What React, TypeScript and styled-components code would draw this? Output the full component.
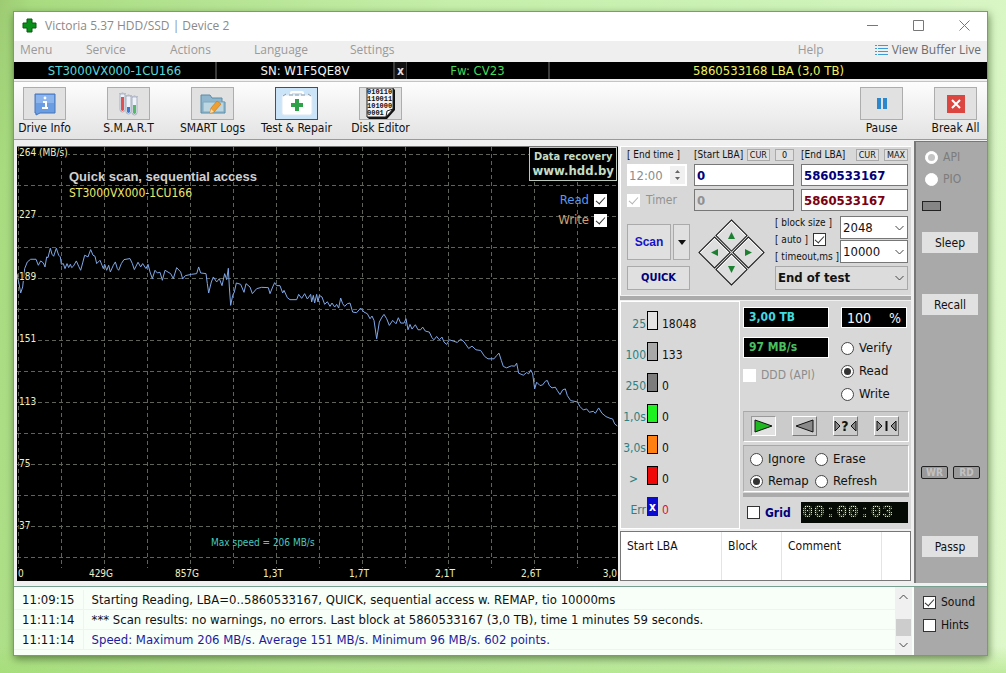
import React from "react";
import styled, { createGlobalStyle, css } from "styled-components";

const ui = '"DejaVu Sans Condensed", "DejaVu Sans", sans-serif';
const caption = '"Open Sans", "Noto Sans", sans-serif';

const Global = createGlobalStyle`
  * { box-sizing: border-box; }
  body { margin: 0; font: 12px/16px ${ui}; color: #111; }
  button, input, select { font: inherit; color: inherit; margin: 0; padding: 0; border-radius: 0; }
`;

const Desktop = styled.div`
  display: flex;
  min-height: 100vh;
  padding: 11px 18px 17px 13px;
  background: linear-gradient(to bottom, transparent 96%, rgba(160, 220, 110, 0.5)),
    linear-gradient(100deg, #9dcb73 0%, #a9dc81 3%, #c5efaa 40%, #cdf3b8 70%, #dff8cb 100%);
`;
const Window = styled.main`
  flex: 1;
  min-width: 0;
  display: flex;
  flex-direction: column;
  background: #f0f0f0;
  border: 1px solid #7e9a70;
  box-shadow: 1px 3px 8px rgba(40, 70, 20, 0.6);
`;

const TitleBar = styled.header`
  display: flex;
  align-items: center;
  height: 29px;
  padding: 0 16px 2px 8px;
  gap: 8px;
  background: #fff;
  color: #8a8a8a;
  font: 12px/16px ${caption};
`;
const Title = styled.h1`
  flex: 1;
  margin: 0;
  font: inherit;
`;
const WindowButtons = styled.div`
  display: flex;
  gap: 32px;
`;
const CaptionButton = styled.button`
  display: flex;
  width: 14px;
  height: 14px;
  border: 0;
  background: none;
  align-items: center;
  justify-content: center;
`;

const MenuBar = styled.nav`
  display: flex;
  height: 21px;
  align-items: center;
  padding: 0 6px 3px;
  background: #efefef;
  color: #9a9a9a;
  font: 12px/16px ${caption};
`;
const MenuLink = styled.a<{ $w?: number }>`
  width: ${(p) => (p.$w ? p.$w + "px" : "auto")};
  color: inherit;
  text-decoration: none;
`;
const BufferLink = styled.a`
  display: flex;
  align-items: center;
  gap: 4px;
  color: #6c6c6c;
  text-decoration: none;
`;
const MenuGap = styled.span`
  flex: 1;
`;

const DriveBar = styled.div`
  display: flex;
  height: 17px;
  background: #000;
  font-size: 13px;
  line-height: 17px;
`;
const DriveCell = styled.div<{ $w?: number; $color: string }>`
  flex: ${(p) => (p.$w ? `0 0 ${p.$w}px` : 1)};
  text-align: center;
  color: ${(p) => p.$color};
  & + & { border-left: 2px solid #3a3a3a; }
`;
const CloseDrive = styled.button`
  width: 14px;
  border: 0;
  border-left: 2px solid #3a3a3a;
  border-right: 1px solid #3a3a3a;
  background: #111;
  color: #ddd;
  font-size: 12px;
  font-weight: bold;
  line-height: 14px;
`;

const Toolbar = styled.div`
  display: flex;
  height: 59px;
  margin-top: 2px;
  padding: 5px 1px 0 0;
  background: linear-gradient(#fdfdfd, #e3e3e3);
  border-top: 1px solid #c4c4c4;
  border-bottom: 1px solid #9a9a9a;
`;
const ToolGroup = styled.div<{ $gap: number }>`
  display: flex;
  gap: ${(p) => p.$gap}px;
`;
const ToolItem = styled.label`
  width: 61px;
  display: flex;
  flex-direction: column;
  align-items: center;
  white-space: nowrap;
`;
const ToolButton = styled.button<{ $on?: boolean }>`
  display: flex;
  align-items: center;
  justify-content: center;
  width: 43px;
  height: 33px;
  background: ${(p) => (p.$on ? "#cce4f7" : "#e1e1e1")};
  border: 1px solid ${(p) => (p.$on ? "#1a5a9a" : "#adadad")};
`;

const Body = styled.div`
  flex: 1;
  display: flex;
  margin-top: 1px;
  min-height: 441px;
`;
const ChartPane = styled.section`
  position: relative;
  flex: 1;
  min-width: 320px;
  margin: 5px 1px 5px 3px;
  background: #000;
  border-top: 1px solid #777;
`;
const ChartSvg = styled.svg`
  position: absolute;
  width: 100%;
  height: 100%;
  font: 10px ${ui};
`;
const ChartTitle = styled.div`
  position: absolute;
  left: 52px;
  top: 21px;
  color: #eee86a;
`;
const ScanName = styled.div`
  color: #d0d0d0;
  font: bold 13px/17px "Liberation Sans", sans-serif;
`;
const Advert = styled.a`
  position: absolute;
  right: 1px;
  top: 0;
  padding: 1px 2px 0;
  border: 1px solid #bcc8bc;
  background: #000;
  color: #c4dcc4;
  font-size: 11px;
  font-weight: bold;
  line-height: 15px;
  height: 34px;
  text-align: center;
  text-decoration: none;
`;
const AdvertSite = styled.span`
  display: block;
  font-size: 13px;
  line-height: 13px;
`;
const Legend = styled.div`
  position: absolute;
  right: 11px;
  top: 45px;
  display: flex;
  flex-direction: column;
  align-items: flex-end;
  gap: 4px;
  font-size: 13px;
`;
const MaxSpeed = styled.div`
  position: absolute;
  left: 194px;
  bottom: 30px;
  color: #45c8c0;
  font-size: 10px;
`;

const CheckLabel = styled.label<{ $color?: string; $gap?: number }>`
  display: flex;
  align-items: center;
  gap: ${(p) => p.$gap ?? 5}px;
  color: ${(p) => p.$color ?? "#111"};
  white-space: nowrap;
`;
const CheckText = styled.span`
  font-size: 12px;
`;
const Tick = styled.input.attrs({ type: "checkbox" })<{ $plain?: boolean }>`
  appearance: none;
  flex: none;
  width: 13px;
  height: 13px;
  background: #fff;
  border: 1px solid ${(p) => (p.$plain ? "#fff" : "#333")};
  display: flex;
  justify-content: center;
  &:checked::after {
    content: "";
    width: 4px;
    height: 8px;
    border: solid ${(p) => (p.disabled ? "#b4b4b4" : "#333")};
    border-width: 0 1px 1px 0;
    transform: rotate(42deg);
  }
`;
const Dot = styled.input.attrs({ type: "radio" })`
  appearance: none;
  flex: none;
  width: 13px;
  height: 13px;
  border: 1px solid ${(p) => (p.disabled ? "#fff" : "#444")};
  border-radius: 50%;
  background: #fff;
  display: grid;
  place-items: center;
  &:checked::after {
    content: "";
    width: 7px;
    height: 7px;
    border-radius: 50%;
    background: ${(p) => (p.disabled ? "#c4c4c4" : "#333")};
  }
`;

const Controls = styled.section`
  width: 295px;
  display: flex;
  flex-direction: column;
  margin-top: 5px;
  padding: 0 3px 0 1px;
`;
const ScanPanel = styled.div`
  height: 149px;
  padding: 2px 3px 0 6px;
  background: #d8d8d8;
  border-top: 1px solid #fff;
  border-left: 1px solid #fff;
`;
const LbaGrid = styled.div`
  display: grid;
  grid-template-columns: 60px 100px 1fr;
  grid-template-rows: 12px 22px 22px;
  column-gap: 7px;
  row-gap: 3px;
  font-size: 10px;
  line-height: 12px;
`;
const Caption = styled.div`
  display: flex;
  align-items: center;
  justify-content: space-between;
  white-space: nowrap;
  font-size: 10px;
  line-height: 12px;
`;
const TinyButton = styled.button`
  min-width: 19px;
  height: 12px;
  padding: 0 2px;
  border: 1px solid #aaa;
  background: #e0e0e0;
  font: 9px/10px ${ui};
`;
const TinyRow = styled.div`
  display: flex;
  gap: 5px;
`;
const field = css`
  width: 100%;
  min-width: 0;
  height: 22px;
  border: 1px solid #777;
  background: #fff;
`;
const LbaInput = styled.input<{ $color?: string }>`
  ${field}
  padding: 0 2px;
  font: bold 13px/18px ${ui};
  color: ${(p) => p.$color ?? "#00007a"};
  &:disabled { background: #dcdcdc; color: #909090; }
`;
const TimeBox = styled.div`
  display: flex;
  height: 22px;
  background: #fff;
  color: #8c8c8c;
  align-items: center;
  justify-content: space-between;
  padding: 0 2px;
  font-size: 13px;
`;
const TimeInput = styled.input`
  width: 38px;
  border: 0;
  background: none;
`;
const Spinner = styled.svg`
  background: #f0f0f0;
`;

const ActionRow = styled.div`
  display: grid;
  grid-template-columns: 63px 67px 1fr;
  column-gap: 8px;
  margin-top: 5px;
`;
const ScanColumn = styled.div`
  display: grid;
  grid-template-columns: 44px 17px;
  grid-template-rows: 36px 24px;
  gap: 6px 2px;
  padding-top: 8px;
`;
const BlueButton = styled.button<{ $wide?: boolean }>`
  grid-column: ${(p) => (p.$wide ? "1 / -1" : "auto")};
  display: flex;
  align-items: center;
  justify-content: center;
  border: 1px solid #aaa;
  background: #e0e0e0;
  color: ${(p) => (p.$wide ? "#00007a" : "#1414c8")};
  font: bold ${(p) => (p.$wide ? 11 : 12)}px/16px ${(p) => (p.$wide ? ui : '"Liberation Sans", sans-serif')};
`;
const PadBox = styled.div`
  display: grid;
  place-items: center;
  height: 67px;
  margin-top: 3px;
`;
const Pad = styled.div`
  display: grid;
  grid-template-columns: 23px 23px;
  grid-template-rows: 23px 23px;
  gap: 1px;
  transform: rotate(45deg);
`;
const PadButton = styled.button`
  display: grid;
  place-items: center;
  border: 1px solid #111;
  background: #dedede;
  box-shadow: inset 1px 1px #fff;
`;
const PadArrow = styled.svg<{ $turn: number }>`
  transform: rotate(${(p) => p.$turn}deg);
`;
const OptionColumn = styled.div`
  display: grid;
  grid-template-columns: 65px 1fr;
  grid-template-rows: 47px 24px;
  row-gap: 3px;
  padding-left: 2px;
`;
const OptionLabels = styled.div`
  display: flex;
  flex-direction: column;
  justify-content: space-between;
  font-size: 10px;
  line-height: 13px;
  white-space: nowrap;
`;
const SelectStack = styled.div`
  display: flex;
  flex-direction: column;
  gap: 1px;
`;
const SelectBox = styled.div<{ $span?: boolean }>`
  grid-column: ${(p) => (p.$span ? "1 / -1" : "auto")};
  display: grid;
  align-items: center;
  > * { grid-area: 1 / 1; }
  > svg { justify-self: end; margin-right: 4px; pointer-events: none; }
`;
const Select = styled.select<{ $bold?: boolean }>`
  appearance: none;
  ${field}
  height: ${(p) => (p.$bold ? 24 : 23)}px;
  padding: 0 2px;
  font-size: 13px;
  ${(p) => p.$bold && "font-weight: bold; background: #dcdcdc; border-color: #a8a8a8;"}
`;

const Divider = styled.div`
  height: 4px;
  margin: 1px 0;
  background: #ababab;
`;
const Stats = styled.div`
  flex: 1;
  display: grid;
  grid-template-columns: 120px 1fr;
  background: #d8d8d8;
`;
const Blocks = styled.ul`
  margin: 0;
  padding: 9px 0 0;
  list-style: none;
  border: 1px solid #fff;
`;
const BlockRow = styled.li`
  display: grid;
  grid-template-columns: 25px 11px 1fr;
  column-gap: 1px;
  align-items: end;
  height: 19px;
  margin-bottom: 12px;
  line-height: 11px;
  &:last-child { margin-bottom: 8px; }
`;
const BlockLimit = styled.span<{ $center?: boolean }>`
  color: #2d8080;
  text-align: ${(p) => (p.$center ? "center" : "right")};
  white-space: nowrap;
`;
const Swatch = styled.span<{ $color: string; $flat?: boolean }>`
  height: 19px;
  border: 1px solid ${(p) => (p.$flat ? p.$color : "#000")};
  background: ${(p) => p.$color};
  color: #fff;
  font-weight: bold;
  line-height: 19px;
  text-align: center;
`;
const BlockCount = styled.span<{ $red?: boolean }>`
  padding-left: 3px;
  color: ${(p) => (p.$red ? "#e01030" : "#111")};
`;

const StatPane = styled.div`
  padding: 6px 2px 0 3px;
  display: flex;
  flex-direction: column;
`;
const ReadoutGrid = styled.div`
  display: grid;
  grid-template-columns: 86px 66px;
  column-gap: 12px;
`;
const StatColumn = styled.div`
  display: flex;
  flex-direction: column;
  gap: 9px;
`;
const Readout = styled.output<{ $color: string; $light?: boolean }>`
  display: flex;
  justify-content: space-between;
  height: 21px;
  padding: 0 5px;
  border: 1px solid #fff;
  background: #000;
  color: ${(p) => p.$color};
  font-weight: ${(p) => (p.$light ? "normal" : "bold")};
  font-size: ${(p) => (p.$light ? 14 : 12)}px;
  line-height: ${(p) => (p.$light ? 21 : 18)}px;
`;
const RadioList = styled.div`
  display: flex;
  flex-direction: column;
  gap: 7px;
  padding-top: 3px;
  font-size: 13px;
`;
const Inset = styled.div<{ $top: number }>`
  margin-top: ${(p) => p.$top}px;
  border: 1px solid #fff;
  border-top-color: #a8a8a8;
  border-left-color: #b0b0b0;
  background: #cbcbcb;
`;
const PlayRow = styled(Inset)`
  display: flex;
  gap: 16px;
  padding: 4px 0 5px 7px;
`;
const PlayButton = styled.button<{ $on?: boolean }>`
  display: grid;
  place-items: center;
  width: 25px;
  height: 20px;
  border: 1px solid;
  border-color: ${(p) => (p.$on ? "#999 #fff #fff #999" : "#fff #777 #777 #fff")};
  background: ${(p) => (p.$on ? "#e2e2e2" : "#cbcbcb")};
`;
const DefectGrid = styled(Inset)`
  display: grid;
  grid-template-columns: 65px 1fr;
  row-gap: 6px;
  padding: 5px 6px 2px;
  font-size: 13px;
`;
const ClockRow = styled.div`
  display: flex;
  align-items: center;
  justify-content: space-between;
  padding: 4px 1px 0 4px;
`;
const Clock = styled.output`
  width: 107px;
  height: 21px;
  padding-left: 1px;
  background: #050a04;
`;
const ClockDigits = styled.span`
  display: block;
  font: bold 19px/21px "Liberation Mono", monospace;
  color: transparent;
  background: conic-gradient(#e8ecd0 25%, #26301c 0) 0 0 / 2px 2px;
  background-clip: text;
`;

const Defects = styled.table`
  width: 100%;
  height: 50px;
  margin: 2px 0 5px;
  border: 1px solid #777;
  border-spacing: 0;
  background: #fff;
  table-layout: fixed;
`;
const DefectHead = styled.th<{ $w?: number }>`
  width: ${(p) => (p.$w ? p.$w + "px" : "auto")};
  height: 36px;
  padding: 6px 6px 0;
  border-right: 1px solid #e4e4e4;
  font-weight: normal;
  text-align: left;
  vertical-align: top;
  &:last-child { border-right: 0; }
`;

const Side = styled.aside`
  width: 73px;
  display: flex;
  flex-direction: column;
  align-items: flex-start;
  margin-bottom: 3px;
  padding: 7px 7px 0 6px;
  background: #a9a9a9;
  border-left: 2px solid #777;
  border-top: 1px solid #777;
`;
const SideRadio = styled.div`
  display: flex;
  flex-direction: column;
  gap: 6px;
  padding-left: 3px;
`;
const Lamp = styled.span`
  width: 19px;
  height: 10px;
  margin-top: 14px;
  border: 1px solid #222;
  background: #858585;
`;
const SideButton = styled.button<{ $top: number }>`
  width: 56px;
  height: 21px;
  margin-top: ${(p) => p.$top}px;
  border: 0;
  background: #e1e1e1;
`;
const BadgeRow = styled.div`
  display: flex;
  gap: 5px;
  margin: 151px 0 0 -1px;
`;
const Badge = styled.span`
  width: 27px;
  height: 13px;
  border: 1px solid #222;
  border-radius: 2px;
  background: #9a9a9a;
  color: #c2c2c2;
  font-size: 10px;
  line-height: 11px;
  font-weight: bold;
  text-align: center;
`;

const Footer = styled.footer`
  display: flex;
  height: 69px;
  border-top: 1px solid #77a090;
`;
const LogArea = styled.div`
  flex: 1;
  min-width: 0;
  display: flex;
  background: #f8fff8;
`;
const LogTable = styled.table`
  flex: 1;
  border-spacing: 0;
  align-self: flex-start;
  margin-top: 3px;
  font-size: 13px;
`;
const LogCell = styled.td<{ $color?: string }>`
  height: 20px;
  padding: 0 8px;
  border-bottom: 1px solid #eef4ee;
  color: ${(p) => p.$color ?? "#111"};
  line-height: 18px;
  white-space: nowrap;
  &:first-child { width: 69px; border-right: 1px solid #eef4ee; }
`;
const ScrollBar = styled.div`
  width: 17px;
  margin-right: 2px;
  display: flex;
  flex-direction: column;
  align-items: center;
  padding: 7px 0;
  background: #f0f0f0;
`;
const Thumb = styled.span`
  width: 15px;
  height: 17px;
  margin: auto 0 6px;
  background: #cdcdcd;
`;
const FootSide = styled.div`
  width: 73px;
  padding: 7px 0 0 9px;
  display: flex;
  flex-direction: column;
  gap: 7px;
  background: #a9a9a9;
`;

const Chevron = ({ up }: { up?: boolean }) => (
  <svg width="9" height="6" viewBox="0 0 9 6" fill="none" stroke="#444">
    <path d={up ? "M.5 5 4.5 1l4 4" : "M.5 1l4 4 4-4"} />
  </svg>
);

const speedCurve =
  "51,400 57,430 62,458 68,440 74,385 82,365 92,357 108,357 115,375 122,362 130,368 135,380 140,350 144,352 151,324 156,342 161,348 169,324 176,345 181,350 184,372 190,370 195,385 201,370 206,382 211,372 215,382 220,378 229,362 236,378 242,390 248,368 254,345 264,350 272,328 279,345 285,348 290,370 300,360 306,375 310,385 314,372 320,390 326,375 331,395 340,375 346,365 352,385 356,390 364,370 372,358 390,355 397,370 403,388 414,366 422,380 428,370 438,385 444,372 450,395 457,415 465,390 472,398 480,396 487,420 495,390 512,400 520,415 530,382 542,395 548,416 556,406 575,402 590,400 596,380 602,398 618,400 622,430 626,458 634,425 640,410 650,425 658,415 666,436 674,400 680,418 685,384 688,440 692,495 698,465 703,455 709,428 722,432 732,456 738,430 750,440 757,460 770,445 785,441 805,442 810,460 818,440 824,427 830,436 840,436 848,458 852,450 862,472 870,478 890,478 896,462 905,474 914,460 922,476 932,462 935,485 940,465 944,488 950,462 954,485 958,465 966,470 974,492 982,484 990,498 996,488 1004,500 1010,492 1016,503 1022,473 1028,490 1034,498 1042,490 1050,488 1058,515 1070,517 1082,503 1092,515 1102,520 1110,535 1116,527 1122,540 1130,595 1138,545 1146,530 1152,522 1160,535 1168,555 1178,540 1188,550 1195,532 1202,548 1212,548 1218,535 1224,568 1230,552 1236,566 1246,553 1254,568 1262,568 1268,560 1276,572 1288,575 1296,592 1302,598 1310,588 1318,598 1326,590 1332,605 1340,612 1348,598 1360,602 1372,606 1382,596 1392,604 1406,624 1416,617 1428,628 1442,630 1454,648 1464,655 1482,655 1490,645 1497,638 1504,660 1510,678 1520,682 1534,676 1544,677 1550,668 1556,698 1570,704 1580,696 1586,700 1592,688 1598,700 1604,745 1610,725 1620,735 1628,733 1636,722 1642,720 1648,735 1656,742 1666,740 1672,750 1680,762 1688,748 1696,745 1702,765 1712,780 1732,784 1740,798 1750,808 1760,805 1768,815 1780,812 1786,818 1796,802 1806,818 1818,828 1830,833 1838,835 1844,850 1852,856";

const speedMarks = ["264 (MB/s)", "227", "189", "151", "113", "75", "37"];
const sizeMarks = ["0", "429G", "857G", "1,3T", "1,7T", "2,1T", "2,6T", "3,0"];
const anchorOf = (i: number) => (i === 0 ? "start" : i === sizeMarks.length - 1 ? "end" : "middle");
const CHART_W = 601;
const CHART_H = 433;
const pctX = (x: number) => `${(x / CHART_W) * 100}%`;
const pctY = (y: number) => `${(y / CHART_H) * 100}%`;

const Chart = () => (
  <ChartSvg role="img" aria-label="Read speed by position">
    <g stroke="#60635a" strokeDasharray="4 3" shapeRendering="crispEdges">
      {Array.from({ length: 14 }, (_, i) => (
        <line key={i} x1={pctX(i * 43 + 1)} x2={pctX(i * 43 + 1)} y1="0" y2="97%" />
      ))}
      {Array.from({ length: 14 }, (_, i) => (
        <line key={i} x1="0" x2="100%" y1={pctY(i * 31 + 7)} y2={pctY(i * 31 + 7)} />
      ))}
    </g>
    <svg width="100%" height="100%" viewBox="51 21 1803 1299" preserveAspectRatio="none">
      <polyline points={speedCurve} fill="none" stroke="#7fa8e8" vectorEffect="non-scaling-stroke" />
    </svg>
    <g fill="#f0f0c0" stroke="#000" strokeWidth="2" paintOrder="stroke">
      {speedMarks.map((m, i) => (
        <text key={m} x="2" y={pctY(i * 62 + 9)}>{m}</text>
      ))}
      {sizeMarks.map((m, i) => (
        <text key={m} x={pctX(i === 0 ? 1 : i === 7 ? 600 : i * 86 - 2)} y={pctY(429)} textAnchor={anchorOf(i)}>{m}</text>
      ))}
    </g>
  </ChartSvg>
);

const InfoIcon = () => (
  <svg width="24" height="24" viewBox="0 0 24 24">
    <path d="M2 2h20v19H7l-4 2v-2H2z" fill="#6a9de2" stroke="#4775bb" />
    <path d="M3 3h18v8H3z" fill="#8bb4ec" />
    <path d="M10 10h3v6h2M9 16h6" stroke="#fff" strokeWidth="2" fill="none" />
    <circle cx="12" cy="6" r="1.4" fill="#fff" />
  </svg>
);
const TubesIcon = () => (
  <svg width="24" height="24" viewBox="0 0 24 24">
    {[
      [3, 1, 5, "#e05050"],
      [9, 3, 15, "#3f78d0"],
      [15, 4, 13, "#54b868"],
    ].map(([x, y, l, c]) => (
      <g key={x as number}>
        <rect x={x} y={y} width="5" height="19" rx="2.5" fill="#eef3fa" stroke="#a8afbd" />
        <path d={`M${Number(x) + 1} ${l}h3v${Number(y) + 17 - Number(l)}q-1.500 2-3 0z`} fill={c as string} />
        <rect x={Number(x) - 1} y={y} width="7" height="1.500" fill="#b6bccb" />
      </g>
    ))}
  </svg>
);
const FolderIcon = () => (
  <svg width="26" height="24" viewBox="0 0 26 24">
    <path d="M1 21V3h9l2 3h10v4h3v11z" fill="#8fb6cc" stroke="#5b8ca8" />
    <path d="M3 20V10h21v10z" fill="#bcd6e2" stroke="#7ea9bf" />
    <path d="M17 9l4 3-7 8-4 1 1-5z" fill="#f0a030" stroke="#c97c20" strokeWidth=".7" />
    <path d="M10 21l1-4 3 3z" fill="#f6e0b8" />
  </svg>
);
const KitIcon = () => (
  <svg width="32" height="27" viewBox="0 0 32 27">
    <path d="M10 5V3q0-1 1-1h10q1 0 1 1v2" fill="none" stroke="#fff" strokeWidth="2" />
    <rect x="1" y="5" width="30" height="20" rx="2" fill="#fff" stroke="#dde8f2" />
    <path d="M2 6l3-2M27 4l3 2M8 5h4M14 5h4M20 5h4" stroke="#8a9aa8" />
    <path d="M14 9h4v4h4v4h-4v4h-4v-4h-4v-4h4z" fill="#2fa148" />
  </svg>
);
const BinaryIcon = () => (
  <svg width="30" height="31" viewBox="0 0 30 31">
    <path d="M2 0h25l2 2v20l-8 9H3l-2-2V2z" fill="#111" />
    <path d="M1 0h26v21l-7 8H1z" fill="#f4f4f4" stroke="#222" />
    <path d="M20 29l1-6 6-2z" fill="#fff" stroke="#222" />
    <g fontFamily="Liberation Mono" fontSize="7" fontWeight="bold" fill="#111">
      <text x="1" y="6">010110</text>
      <text x="1" y="13">110011</text>
      <text x="1" y="20">101000</text>
      <text x="1" y="27">0001</text>
    </g>
  </svg>
);
const PauseIcon = () => (
  <svg width="12" height="12">
    <path d="M1 0h4v11H1zM7 0h4v11H7z" fill="#2d87cc" />
  </svg>
);
const BreakIcon = () => (
  <svg width="18" height="18">
    <rect width="18" height="18" fill="#dc4640" />
    <path d="M5 5l8 8M13 5l-8 8" stroke="#fff" strokeWidth="2" />
  </svg>
);

const tools = [
  { name: "Drive Info", icon: <InfoIcon /> },
  { name: "S.M.A.R.T", icon: <TubesIcon /> },
  { name: "SMART Logs", icon: <FolderIcon /> },
  { name: "Test & Repair", icon: <KitIcon />, on: true },
  { name: "Disk Editor", icon: <BinaryIcon /> },
];
const runTools = [
  { name: "Pause", icon: <PauseIcon /> },
  { name: "Break All", icon: <BreakIcon /> },
];
const menus: [string, number][] = [
  ["Menu", 66],
  ["Service", 84],
  ["Actions", 84],
  ["Language", 96],
  ["Settings", 60],
];
const blocks = [
  { limit: "25", color: "#e4e4e4", count: "18048" },
  { limit: "100", color: "#a8a8a8", count: "133" },
  { limit: "250", color: "#7c7c7c", count: "0" },
  { limit: "1,0s", color: "#1ff01f", count: "0" },
  { limit: "3,0s", color: "#ff8010", count: "0" },
  { limit: ">", color: "#f00808", count: "0", center: true },
  { limit: "Err", color: "#0a0ad0", count: "0", mark: "x" },
];
const log = [
  { time: "11:09:15", text: "Starting Reading, LBA=0..5860533167, QUICK, sequential access w. REMAP, tio 10000ms" },
  { time: "11:11:14", text: "*** Scan results: no warnings, no errors. Last block at 5860533167 (3,0 TB), time 1 minutes 59 seconds." },
  { time: "11:11:14", text: "Speed: Maximum 206 MB/s. Average 151 MB/s. Minimum 96 MB/s. 602 points.", color: "#1c1ca0" },
];

export default function App() {
  return (
    <>
      <Global />
      <Desktop>
        <Window>
          <TitleBar>
            <svg width="15" height="15">
              <path d="M5 1h5v4h4v5h-4v4H5v-4H1V5h4z" fill="#0a8f1a" stroke="#045c0c" />
            </svg>
            <Title>Victoria 5.37 HDD/SSD | Device 2</Title>
            <WindowButtons>
              <CaptionButton aria-label="Minimize">
                <svg width="11" height="11"><path d="M0 5.500h11" stroke="#777" /></svg>
              </CaptionButton>
              <CaptionButton aria-label="Maximize">
                <svg width="11" height="11"><path d="M.5.5h10v10H.5z" stroke="#777" fill="none" /></svg>
              </CaptionButton>
              <CaptionButton aria-label="Close">
                <svg width="11" height="11"><path d="M.5.500l10 10M10.500.500l-10 10" stroke="#777" /></svg>
              </CaptionButton>
            </WindowButtons>
          </TitleBar>
          <MenuBar>
            {menus.map(([m, w]) => (
              <MenuLink key={m} href="#" $w={w}>{m}</MenuLink>
            ))}
            <MenuGap />
            <MenuLink href="#" $w={77}>Help</MenuLink>
            <BufferLink href="#">
              <svg width="13" height="13" stroke="#3d9bd6">
                <path d="M0 1.500h2M3 1.500h10M0 4.500h2M3 4.500h10M0 7.500h2M3 7.500h10M0 10.500h2M3 10.500h10" />
              </svg>
              View Buffer Live
            </BufferLink>
          </MenuBar>
          <DriveBar>
            <DriveCell $w={201} $color="#58d8dc">ST3000VX000-1CU166</DriveCell>
            <DriveCell $w={178} $color="#f4f4f4">SN: W1F5QE8V</DriveCell>
            <CloseDrive>x</CloseDrive>
            <DriveCell $w={141} $color="#48d858">Fw: CV23</DriveCell>
            <DriveCell $color="#f0f060">5860533168 LBA (3,0 TB)</DriveCell>
          </DriveBar>
          <Toolbar>
            <ToolGroup $gap={23}>
              {tools.map((t) => (
                <ToolItem key={t.name}>
                  <ToolButton $on={t.on}>{t.icon}</ToolButton>
                  {t.name}
                </ToolItem>
              ))}
            </ToolGroup>
            <MenuGap />
            <ToolGroup $gap={13}>
              {runTools.map((t) => (
                <ToolItem key={t.name}>
                  <ToolButton>{t.icon}</ToolButton>
                  {t.name}
                </ToolItem>
              ))}
            </ToolGroup>
          </Toolbar>

          <Body>
            <ChartPane>
              <Chart />
              <ChartTitle>
                <ScanName>Quick scan, sequential access</ScanName>
                ST3000VX000-1CU166
              </ChartTitle>
              <Advert href="#">Data recovery<AdvertSite>www.hdd.by</AdvertSite></Advert>
              <Legend>
                <CheckLabel $color="#5a98e8">Read <Tick defaultChecked $plain /></CheckLabel>
                <CheckLabel $color="#d0a070">Write <Tick defaultChecked $plain /></CheckLabel>
              </Legend>
              <MaxSpeed>Max speed = 206 MB/s</MaxSpeed>
            </ChartPane>

            <Controls>
              <ScanPanel>
                <LbaGrid>
                  <Caption>[ End time ]</Caption>
                  <Caption>
                    [Start LBA]
                    <TinyRow><TinyButton>CUR</TinyButton><TinyButton>0</TinyButton></TinyRow>
                  </Caption>
                  <Caption>
                    [End LBA]
                    <TinyRow><TinyButton>CUR</TinyButton><TinyButton>MAX</TinyButton></TinyRow>
                  </Caption>
                  <TimeBox>
                    <TimeInput aria-label="End time" defaultValue="12:00" disabled />
                    <Spinner width="15" height="18">
                      <path d="M5 7l2.500-3L10 7zM5 11l2.500 3 2.500-3z" fill="#666" />
                    </Spinner>
                  </TimeBox>
                  <LbaInput aria-label="Start LBA" defaultValue="0" />
                  <LbaInput aria-label="End LBA" defaultValue="5860533167" />
                  <CheckLabel $color="#929292" $gap={6}>
                    <Tick defaultChecked disabled $plain />
                    <CheckText>Timer</CheckText>
                  </CheckLabel>
                  <LbaInput aria-label="Current LBA" defaultValue="0" disabled />
                  <LbaInput aria-label="Last LBA" defaultValue="5860533167" $color="#7a0010" />
                </LbaGrid>
                <ActionRow>
                  <ScanColumn>
                    <BlueButton>Scan</BlueButton>
                    <BlueButton aria-label="Scan options">
                      <svg width="8" height="5"><path d="M0 0h8L4 5z" fill="#111" /></svg>
                    </BlueButton>
                    <BlueButton $wide>QUICK</BlueButton>
                  </ScanColumn>
                  <PadBox>
                    <Pad>
                      {[["Up", 0], ["Right", 90], ["Left", -90], ["Down", 180]].map(([n, a]) => (
                        <PadButton key={n} aria-label={String(n)}>
                          <PadArrow $turn={Number(a) - 45} width="7" height="7">
                            <path d="M3.500 0l3.500 7H0z" fill="#1c8030" />
                          </PadArrow>
                        </PadButton>
                      ))}
                    </Pad>
                  </PadBox>
                  <OptionColumn>
                    <OptionLabels>
                      <label htmlFor="block">[ block size ]</label>
                      <CheckLabel>[ auto ] <Tick defaultChecked /></CheckLabel>
                      <label htmlFor="timeout">[ timeout,ms ]</label>
                    </OptionLabels>
                    <SelectStack>
                      <SelectBox>
                        <Select id="block"><option>2048</option></Select>
                        <Chevron />
                      </SelectBox>
                      <SelectBox>
                        <Select id="timeout"><option>10000</option></Select>
                        <Chevron />
                      </SelectBox>
                    </SelectStack>
                    <SelectBox $span>
                      <Select $bold aria-label="After test"><option>End of test</option></Select>
                      <Chevron />
                    </SelectBox>
                  </OptionColumn>
                </ActionRow>
              </ScanPanel>
              <Divider />
              <Stats>
                <Blocks>
                  {blocks.map((b) => (
                    <BlockRow key={b.limit}>
                      <BlockLimit $center={b.center}>{b.limit}</BlockLimit>
                      <Swatch $color={b.color} $flat={!!b.mark}>{b.mark}</Swatch>
                      <BlockCount $red={!!b.mark}>{b.count}</BlockCount>
                    </BlockRow>
                  ))}
                </Blocks>
                <StatPane>
                  <ReadoutGrid>
                    <StatColumn>
                      <Readout $color="#40dce0">3,00 TB</Readout>
                      <Readout $color="#48c060">97 MB/s</Readout>
                      <CheckLabel $color="#8c8c8c"><Tick disabled $plain />DDD (API)</CheckLabel>
                    </StatColumn>
                    <StatColumn>
                      <Readout $color="#f4f4f4" $light><span>100</span><span>%</span></Readout>
                      <RadioList>
                        <CheckLabel><Dot name="mode" />Verify</CheckLabel>
                        <CheckLabel><Dot name="mode" defaultChecked />Read</CheckLabel>
                        <CheckLabel><Dot name="mode" />Write</CheckLabel>
                      </RadioList>
                    </StatColumn>
                  </ReadoutGrid>
                  <PlayRow $top={9}>
                    <PlayButton $on aria-label="Forward">
                      <svg width="19" height="14"><path d="M1 1l17 6-17 6z" fill="#20b820" stroke="#111" /></svg>
                    </PlayButton>
                    <PlayButton aria-label="Backward">
                      <svg width="19" height="14"><path d="M18 1v12L1 7z" fill="#8a8a8a" stroke="#111" /></svg>
                    </PlayButton>
                    <PlayButton aria-label="Random">
                      <svg width="23" height="14" fill="#888" stroke="#111">
                        <path d="M1 2v10l5-5zM22 2v10l-5-5z" />
                        <text x="11" y="12" textAnchor="middle" fill="#111" stroke="none" fontSize="14" fontWeight="bold">?</text>
                      </svg>
                    </PlayButton>
                    <PlayButton aria-label="Butterfly">
                      <svg width="23" height="14" fill="#888" stroke="#111">
                        <path d="M2 2v10l5-5zM21 2v10l-5-5z" />
                        <path d="M11.500 2v10" strokeWidth="2" />
                      </svg>
                    </PlayButton>
                  </PlayRow>
                  <DefectGrid $top={3}>
                    <CheckLabel><Dot name="defect" />Ignore</CheckLabel>
                    <CheckLabel><Dot name="defect" />Erase</CheckLabel>
                    <CheckLabel><Dot name="defect" defaultChecked />Remap</CheckLabel>
                    <CheckLabel><Dot name="defect" />Refresh</CheckLabel>
                  </DefectGrid>
                  <Divider />
                  <ClockRow>
                    <CheckLabel $color="#00007a"><Tick /><b>Grid</b></CheckLabel>
                    <Clock><ClockDigits>00:00:03</ClockDigits></Clock>
                  </ClockRow>
                </StatPane>
              </Stats>
              <Defects>
                <thead>
                  <tr>
                    <DefectHead $w={101}>Start LBA</DefectHead>
                    <DefectHead $w={60}>Block</DefectHead>
                    <DefectHead $w={100}>Comment</DefectHead>
                    <DefectHead />
                  </tr>
                </thead>
              </Defects>
            </Controls>

            <Side>
              <SideRadio>
                <CheckLabel $color="#7c7c7c"><Dot name="bus" disabled defaultChecked />API</CheckLabel>
                <CheckLabel $color="#7c7c7c"><Dot name="bus" disabled />PIO</CheckLabel>
              </SideRadio>
              <Lamp />
              <SideButton $top={21}>Sleep</SideButton>
              <SideButton $top={41}>Recall</SideButton>
              <BadgeRow><Badge>WR</Badge><Badge>RD</Badge></BadgeRow>
              <SideButton $top={57}>Passp</SideButton>
            </Side>
          </Body>

          <Footer>
            <LogArea>
              <LogTable>
                <tbody>
                  {log.map((l, i) => (
                    <tr key={i}>
                      <LogCell>{l.time}</LogCell>
                      <LogCell $color={l.color}>{l.text}</LogCell>
                    </tr>
                  ))}
                </tbody>
              </LogTable>
              <ScrollBar><Chevron up /><Thumb /><Chevron /></ScrollBar>
            </LogArea>
            <FootSide>
              <CheckLabel><Tick defaultChecked />Sound</CheckLabel>
              <CheckLabel><Tick />Hints</CheckLabel>
            </FootSide>
          </Footer>
        </Window>
      </Desktop>
    </>
  );
}
